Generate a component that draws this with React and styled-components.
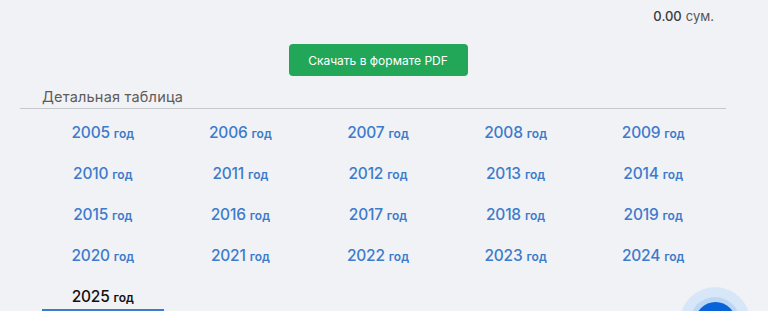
import React from 'react';
import styled, { createGlobalStyle } from 'styled-components';

const GlobalStyle = createGlobalStyle`
  body {
    margin: 0;
    background: #f1f2f6;
    font-family: Inter, "Noto Sans", sans-serif;
  }
`;

const Page = styled.div`
  width: 706px;
  margin-left: 20px;
  padding-top: 8px;
`;

const Total = styled.div`
  display: flex;
  justify-content: flex-end;
  align-items: baseline;
  gap: 4px;
  padding-right: 12px;
  font-size: 13px;
  line-height: 16px;
  color: #555;
`;

const Amount = styled.span`
  font-weight: 500;
  color: #3a3a3a;
`;

const ButtonRow = styled.div`
  display: flex;
  justify-content: center;
  padding-left: 10px;
  margin-top: 20px;
`;

const PdfButton = styled.button`
  width: 179px;
  height: 32px;
  border: none;
  border-radius: 4px;
  background: #22a759;
  color: #fff;
  font-family: inherit;
  font-size: 12px;
  cursor: pointer;
`;

const SectionTitle = styled.div`
  margin-top: 13px;
  padding: 0 0 3px 22px;
  border-bottom: 1px solid #c6c7cb;
  font-size: 14.5px;
  line-height: 16px;
  color: #5c5c5c;
  letter-spacing: 0.2px;
`;

const YearGrid = styled.div`
  display: grid;
  grid-template-columns: repeat(5, 1fr);
  row-gap: 7px;
  padding: 4px 4px 0 14px;
`;

const YearLink = styled.a`
  justify-self: center;
  display: flex;
  justify-content: center;
  align-items: baseline;
  gap: 4px;
  box-sizing: border-box;
  width: 122px;
  height: 34px;
  padding: 11px 0 0;
  border-bottom: 2px solid ${p => (p.$active ? '#3d7bcb' : 'transparent')};
  line-height: 18px;
  font-weight: 600;
  color: ${p => (p.$active ? '#111' : '#3d7bcb')};
  text-decoration: none;
  cursor: pointer;
`;

const Num = styled.span`
  font-size: 15.5px;
  font-weight: 500;
  letter-spacing: -0.2px;
`;

const Unit = styled.span`
  font-size: 12px;
`;

const Fab = styled.div`
  position: fixed;
  right: 18px;
  bottom: -46px;
  width: 70px;
  height: 70px;
  border-radius: 50%;
  background: #d7e7f8;
  display: flex;
  align-items: center;
  justify-content: center;
`;

const FabRing = styled.div`
  width: 50px;
  height: 50px;
  border-radius: 50%;
  background: #bcd7f5;
  display: flex;
  align-items: center;
  justify-content: center;
`;

const FabCore = styled.div`
  width: 41px;
  height: 41px;
  border-radius: 50%;
  background: #0862d8;
`;

const years = Array.from({ length: 21 }, (_, i) => 2005 + i);

export default function App() {
  return (
    <>
      <GlobalStyle />
      <Page>
        <Total>
          <Amount>0.00</Amount>
          <span>сум.</span>
        </Total>
        <ButtonRow>
          <PdfButton>Скачать в формате PDF</PdfButton>
        </ButtonRow>
        <SectionTitle>Детальная таблица</SectionTitle>
        <YearGrid>
          {years.map(y => (
            <YearLink key={y} $active={y === 2025}>
              <Num>{y}</Num>
              <Unit>год</Unit>
            </YearLink>
          ))}
        </YearGrid>
      </Page>
      <Fab>
        <FabRing>
          <FabCore />
        </FabRing>
      </Fab>
    </>
  );
}
